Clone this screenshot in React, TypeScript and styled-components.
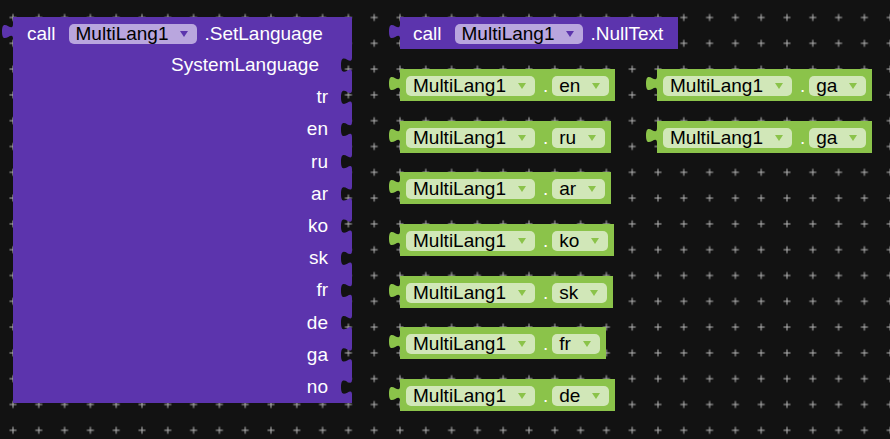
import React from "react";
import styled, { createGlobalStyle } from "styled-components";

const PURPLE = "#5c34ad";
const PURPLE_FIELD = "#b9a6de";
const GREEN = "#8bc34a";
const GREEN_FIELD = "#d1e7b8";
const GRID = 25.8;

const GlobalStyle = createGlobalStyle`
  html, body {
    margin: 0;
    padding: 0;
    background: #121212;
  }
`;

const Workspace = styled.div`
  position: relative;
  width: 890px;
  height: 439px;
  overflow: hidden;
  background: #121212;
  font-family: "Liberation Sans", Arial, sans-serif;
  font-size: 19px;
`;

const GridLayer = styled.svg`
  position: absolute;
  inset: 0;
  width: 100%;
  height: 100%;
`;

// blocks sit at their own spot on the canvas
const Placed = styled.div<{ $x: number; $y: number }>`
  position: absolute;
  left: ${(p) => p.$x}px;
  top: ${(p) => p.$y}px;
`;

const BlockBody = styled.div<{ $color: string }>`
  position: relative;
  display: flex;
  align-items: center;
  box-sizing: border-box;
  height: 32px;
  padding: 1px 6px 0 6px;
  background: ${(p) => p.$color};
  color: #fff;
  white-space: nowrap;
`;

const CallBody = styled(BlockBody)`
  padding: 1px 15px 0 13px;
`;

const TabSvg = styled.svg`
  position: absolute;
  left: -11px;
  top: 7px;
  width: 11px;
  height: 15px;
  overflow: visible;
`;

const BigBlock = styled.div`
  position: relative;
  width: 339px;
  height: 386px;
  color: #fff;
  white-space: nowrap;
`;

const ShapeSvg = styled.svg`
  position: absolute;
  left: 0;
  top: 0;
  width: 339px;
  height: 386px;
  overflow: visible;
`;

const Content = styled.div`
  position: relative;
  display: flex;
  flex-direction: column;
`;

const HeaderRow = styled.div`
  display: flex;
  align-items: center;
  box-sizing: border-box;
  height: 32px;
  padding: 2px 0 0 14px;
`;

const InputRow = styled.div<{ $first?: boolean }>`
  display: flex;
  align-items: center;
  justify-content: flex-end;
  height: 32.2px;
  padding-right: ${(p) => (p.$first ? 33 : 24)}px;
`;

const Keyword = styled.span`
  margin-right: 13px;
`;

const Method = styled.span`
  margin-left: 7px;
`;

const Field = styled.div<{ $bg: string }>`
  display: flex;
  align-items: center;
  height: 20px;
  padding: 0 9px 0 7px;
  border-radius: 5px;
  background: ${(p) => p.$bg};
  color: #000;
`;

const Arrow = styled.span<{ $color: string }>`
  width: 0;
  height: 0;
  margin-left: 12px;
  border-left: 4.5px solid transparent;
  border-right: 4.5px solid transparent;
  border-top: 6px solid ${(p) => p.$color};
`;

const Dot = styled.span`
  margin: 0 4px 0 8px;
`;

const TAB = "c0,10 -11,-8 -11,7.5 s11,-2.5 11,7.5";

function Tab({ color }: { color: string }) {
  return (
    <TabSvg viewBox="0 0 11 15">
      <path d={`M11,0 ${TAB} Z`} fill={color} />
    </TabSvg>
  );
}

function Dropdown({ text, bg, arrow }: { text: string; bg: string; arrow: string }) {
  return (
    <Field $bg={bg}>
      {text}
      <Arrow $color={arrow} />
    </Field>
  );
}

const inputs = ["SystemLanguage", "tr", "en", "ru", "ar", "ko", "sk", "fr", "de", "ga", "no"];

function bigPath(w: number, h: number) {
  let d = `M0,0 H${w}`;
  inputs.forEach((_, i) => {
    const y = 32 + 32.2 * i + 16.1 - 7.5;
    d += ` V${y.toFixed(1)} ${TAB}`;
  });
  d += ` V${h} H0 V22 c0,-10 -11,8 -11,-7.5 s11,2.5 11,-7.5 Z`;
  return d;
}

function SetLanguageBlock() {
  return (
    <BigBlock>
      <ShapeSvg viewBox="0 0 339 386">
        <path d={bigPath(339, 386)} fill={PURPLE} />
      </ShapeSvg>
      <Content>
        <HeaderRow>
          <Keyword>call</Keyword>
          <Dropdown text="MultiLang1" bg={PURPLE_FIELD} arrow={PURPLE} />
          <Method>.SetLanguage</Method>
        </HeaderRow>
        {inputs.map((name, i) => (
          <InputRow key={name} $first={i === 0}>
            {name}
          </InputRow>
        ))}
      </Content>
    </BigBlock>
  );
}

function LangBlock({ lang }: { lang: string }) {
  return (
    <BlockBody $color={GREEN}>
      <Tab color={GREEN} />
      <Dropdown text="MultiLang1" bg={GREEN_FIELD} arrow={GREEN} />
      <Dot>.</Dot>
      <Dropdown text={lang} bg={GREEN_FIELD} arrow={GREEN} />
    </BlockBody>
  );
}

const gy = (i: number) => 17.5 + GRID * i;

const column1 = ["en", "ru", "ar", "ko", "sk", "fr", "de"];

function App() {
  const c = GRID / 2;
  return (
    <>
      <GlobalStyle />
      <Workspace>
        <GridLayer>
          <defs>
            <pattern
              id="grid"
              patternUnits="userSpaceOnUse"
              width={GRID}
              height={GRID}
              x={13 - c}
              y={17.5 - c}
            >
              <path
                d={`M${c - 3.5},${c} H${c + 3.5} M${c},${c - 3.5} V${c + 3.5}`}
                stroke="#b8b8b8"
                strokeWidth={1}
              />
            </pattern>
          </defs>
          <rect width="100%" height="100%" fill="url(#grid)" />
        </GridLayer>

        <Placed $x={13} $y={17}>
          <SetLanguageBlock />
        </Placed>

        <Placed $x={400} $y={17}>
          <CallBody $color={PURPLE}>
            <Tab color={PURPLE} />
            <Keyword>call</Keyword>
            <Dropdown text="MultiLang1" bg={PURPLE_FIELD} arrow={PURPLE} />
            <Method>.NullText</Method>
          </CallBody>
        </Placed>

        {column1.map((lang, i) => (
          <Placed key={lang} $x={400} $y={Math.round(gy(2 + i * 2))}>
            <LangBlock lang={lang} />
          </Placed>
        ))}

        <Placed $x={657} $y={Math.round(gy(2))}>
          <LangBlock lang="ga" />
        </Placed>
        <Placed $x={657} $y={Math.round(gy(4))}>
          <LangBlock lang="ga" />
        </Placed>
      </Workspace>
    </>
  );
}

export default App;
